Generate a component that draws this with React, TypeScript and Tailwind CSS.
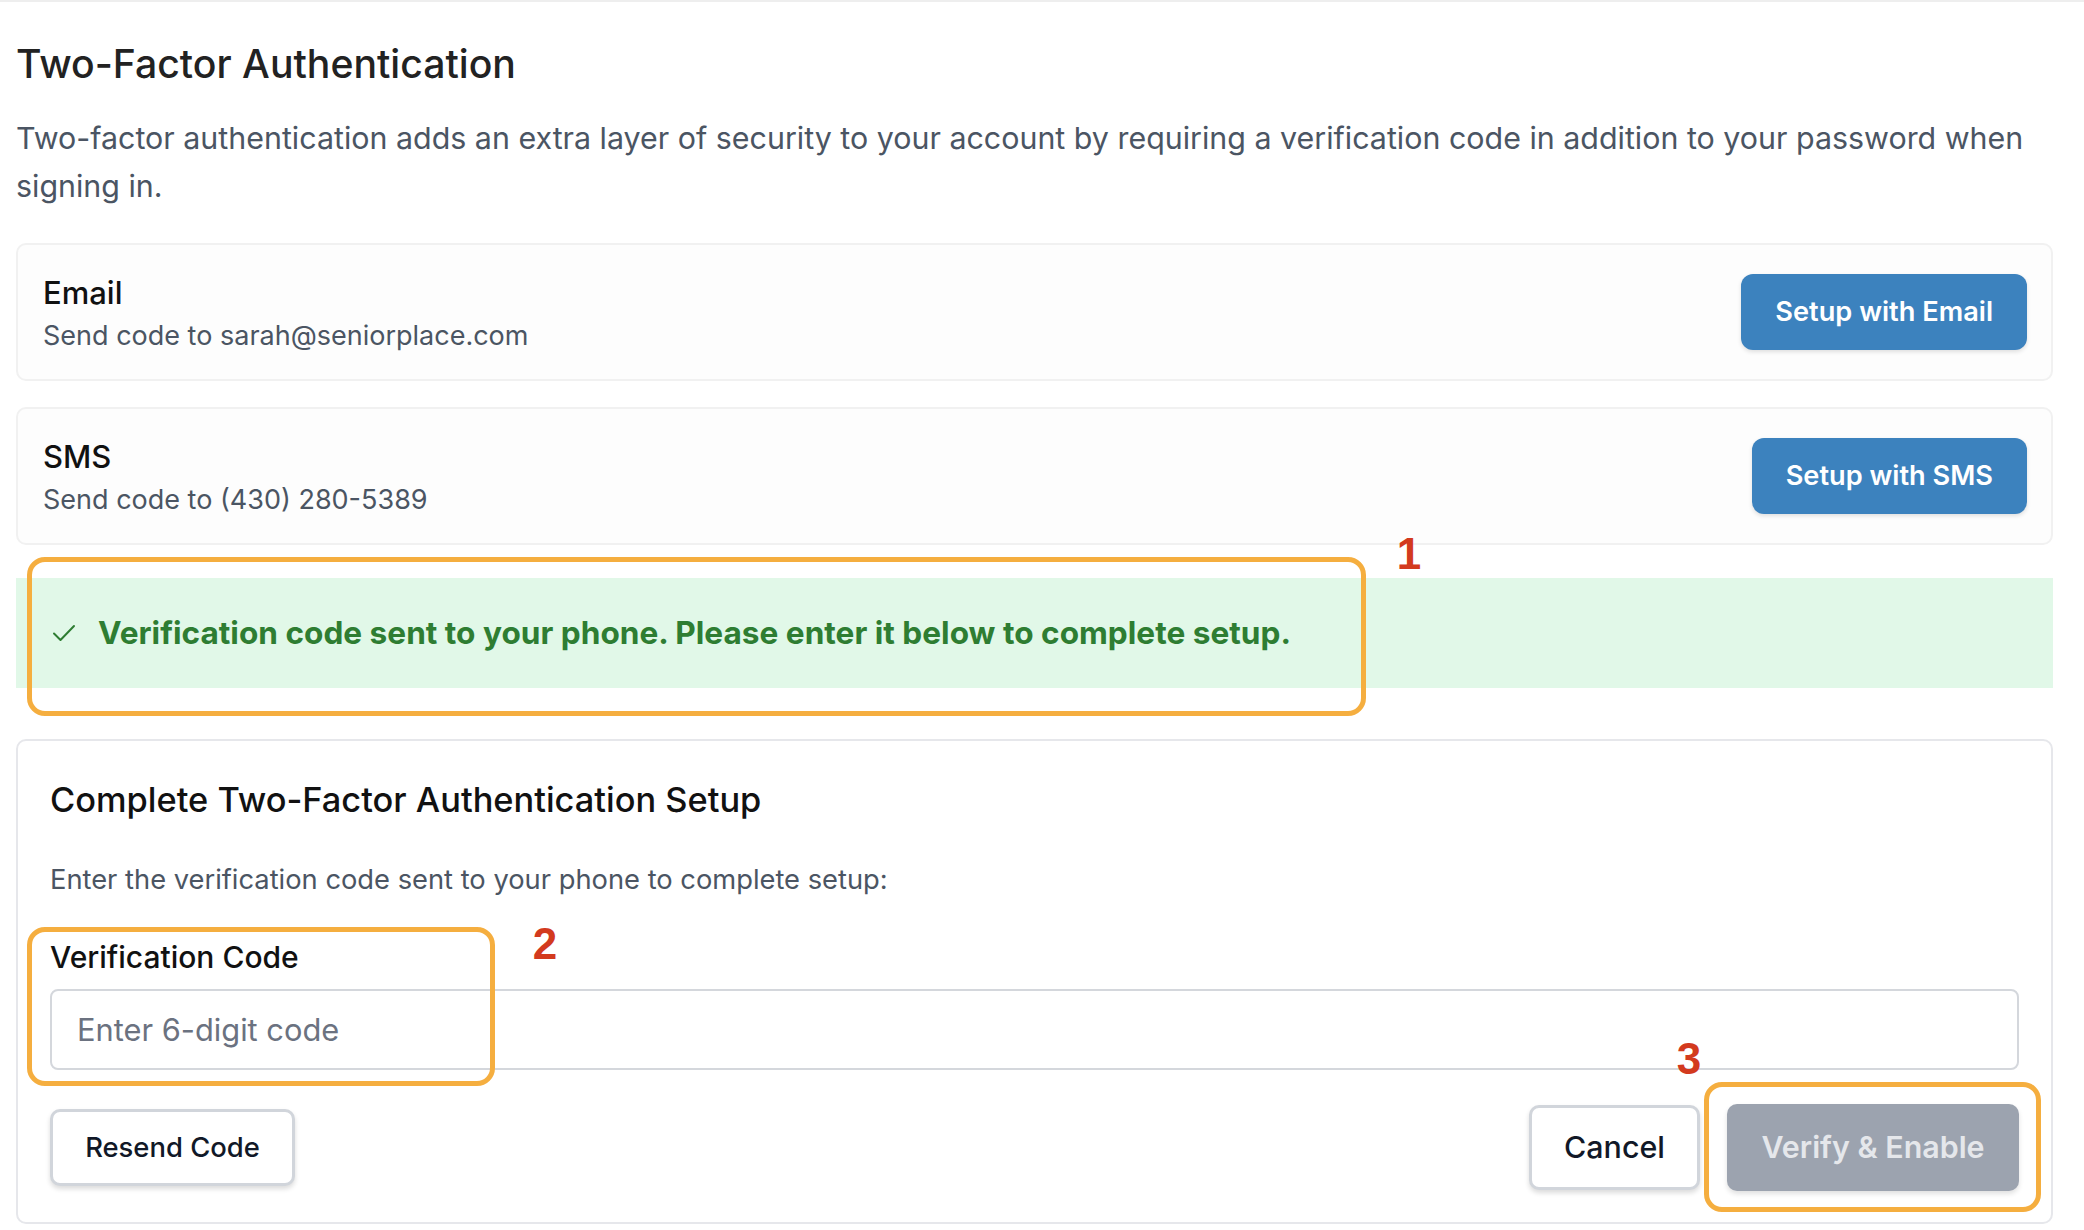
import React from 'react';

const Check = () => (
  <svg width="24" height="18" viewBox="0 0 24 18" fill="none" className="shrink-0">
    <polyline points="2,9.5 8.5,16 22,2" stroke="#2e7d32" strokeWidth="2" strokeLinecap="round" strokeLinejoin="round" />
  </svg>
);

function MethodCard({ label, detail, action }: { label: string; detail: string; action: string }) {
  return (
    <div className="flex h-[138px] items-center justify-between rounded-[10px] border-2 border-[#f1f1f1] bg-[#fdfdfd] pl-[25px] pr-[24px]">
      <div className="flex flex-col pt-[6px]">
        <div className="text-[31px] leading-[42px] font-medium text-[#111111]">{label}</div>
        <div className="text-[27px] leading-[44px] text-[#4b5563]">{detail}</div>
      </div>
      <button className="h-[76px] rounded-[12px] bg-[#3c82be] px-[34px] text-[27.2px] font-semibold text-white shadow-[0_2px_4px_rgba(0,0,0,0.12)]">
        {action}
      </button>
    </div>
  );
}

function Mark({ n, left, top }: { n: string; left: string; top: string }) {
  return (
    <div
      className={`absolute ${left} ${top} w-[40px] text-center font-['Liberation_Sans',Arial,sans-serif] text-[44px] leading-[44px] font-bold text-[#d33a1e]`}
    >
      {n}
    </div>
  );
}

export default function App() {
  return (
    <div className="relative min-h-[1230px] border-t-2 border-[#eeeeee] bg-white pl-[16px] pr-[31px] font-['Inter',sans-serif]">
      <h1 className="pt-[38px] text-[39.2px] leading-[48px] font-medium text-[#222222]">Two-Factor Authentication</h1>
      <p className="mt-[26px] text-[30.4px] leading-[48px] text-[#4b5563]">
        Two-factor authentication adds an extra layer of security to your account by requiring a verification code in addition to your password when signing in.
      </p>

      <div className="mt-[33px] flex flex-col gap-[26px]">
        <MethodCard label="Email" detail="Send code to sarah@seniorplace.com" action="Setup with Email" />
        <MethodCard label="SMS" detail="Send code to (430) 280-5389" action="Setup with SMS" />
      </div>

      <div className="mt-[33px] flex h-[110px] items-center gap-[22px] bg-[#e1f8e8] pl-[36px]">
        <Check />
        <span className="text-[31.6px] font-bold text-[#2e7d32]">
          Verification code sent to your phone. Please enter it below to complete setup.
        </span>
      </div>

      <div className="mt-[51px] rounded-[10px] border-2 border-[#e6e7eb] bg-white px-[32px] pt-[35px] pb-[31px]">
        <h2 className="text-[34.4px] leading-[48px] font-medium text-[#111111]">Complete Two-Factor Authentication Setup</h2>
        <p className="mt-[36px] text-[27.3px] leading-[40px] text-[#4b5563]">
          Enter the verification code sent to your phone to complete setup:
        </p>
        <label className="mt-[37px] block text-[30px] leading-[40px] font-medium text-[#111111]">Verification Code</label>
        <input
          placeholder="Enter 6-digit code"
          className="mt-[12px] block h-[81px] w-full rounded-[8px] border-2 border-[#d4d7dc] bg-white px-[25px] text-[30.8px] text-[#111827] placeholder:text-[#6b7280] outline-none"
        />
        <div className="mt-[34px] flex h-[87px] items-center justify-between">
          <button className="h-[77px] w-[245px] rounded-[10px] border-[3px] border-[#d1d5db] bg-white text-[27.4px] font-medium text-[#111827] shadow-[0_3px_5px_rgba(0,0,0,0.14)]">
            Resend Code
          </button>
          <div className="flex items-center gap-[27px]">
            <button className="h-[85px] w-[171px] rounded-[10px] border-[3px] border-[#d1d5db] bg-white text-[30.4px] font-medium text-[#111827] shadow-[0_3px_5px_rgba(0,0,0,0.14)]">
              Cancel
            </button>
            <button className="h-[87px] w-[292px] rounded-[10px] bg-[#9ca3af] text-[30.4px] font-semibold text-[#e5e7eb] shadow-[0_3px_5px_rgba(0,0,0,0.12)]">
              Verify &amp; Enable
            </button>
          </div>
        </div>
      </div>

      <div className="pointer-events-none absolute left-[27px] top-[555px] h-[159px] w-[1339px] rounded-[18px] border-[5px] border-[#f5ae3f]" />
      <div className="pointer-events-none absolute left-[27px] top-[925px] h-[159px] w-[468px] rounded-[18px] border-[5px] border-[#f5ae3f]" />
      <div className="pointer-events-none absolute left-[1704px] top-[1080px] h-[130px] w-[337px] rounded-[18px] border-[5px] border-[#f5ae3f]" />
      <Mark n="1" left="left-[1389px]" top="top-[530px]" />
      <Mark n="2" left="left-[525px]" top="top-[920px]" />
      <Mark n="3" left="left-[1669px]" top="top-[1035px]" />
    </div>
  );
}
